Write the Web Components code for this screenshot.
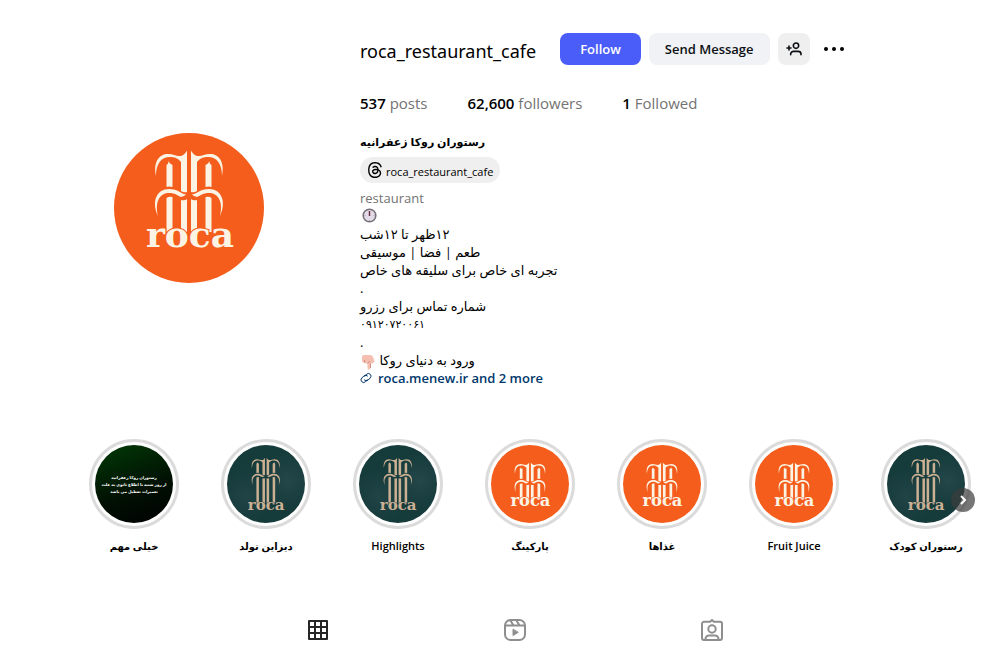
<!DOCTYPE html>
<html lang="en">
<head>
<meta charset="utf-8">
<meta name="viewport" content="width=device-width, initial-scale=1">
<title>roca_restaurant_cafe</title>
<style>
    body {
        margin: 0;
        background: #fff;
        color: #000;
        font-family: "Open Sans", "Noto Sans", "DejaVu Sans", sans-serif;
        font-size: 13px;
        line-height: 18px;
        overflow-x: hidden;
    }
</style>
</head>
<body>
<profile-page></profile-page>

<script>
// Logo: half of the mark is drawn once and mirrored around x = 75.
// "rise" lifts the crown and makes the lower stems longer.
class RocaLogo extends HTMLElement {
    constructor() {
        super();
        this.attachShadow({ mode: 'open' });
    }

    connectedCallback() {
        const variant = this.getAttribute('variant') || 'large';
        const look = {
            large: { box: '0 0 150 150', rise: 0, bg: '#f45d1b', ink: '#fbf3e4' },
            small: { box: '-11 -21 172 172', rise: 0, bg: '#f45d1b', ink: '#fbf3e4' },
            teal: { box: '-18 -41 187 187', rise: 28, bg: '#193d3e', ink: '#cbb094' }
        }[variant];
        const top = 65 - look.rise;
        const half = `
            <g transform="translate(0 ${-look.rise})">
                <path d="M42 43C39 29 45 21 54 21C59 21 62 23 65 23C69 23 71 21 73 17.500V59Q70 60 67 58V29C64 25 60 24 56 24C47 24 42 31 42 43Z"/>
                <path d="M52.500 32C54 31 54.500 30 54.500 28C55 30 57 31 58.500 32V54Q55 53 52.500 54Z"/>
                <path d="M44 83C37 68 43 56 55 56C64 56 67 61 72 61.500L70 63L67 64C64 63 62 61 59 60.500C48 58 40 66 44 83Z"/>
            </g>
            <path d="M52.500 ${top}Q55 ${top - 2} 58.500 ${top - 1}V99H52.500Z"/>
            <path d="M67 ${top + 2}Q71 ${top + 3} 73 ${top + 1}V99H67Z"/>`;
        this.shadowRoot.innerHTML = `
            <style>
                :host { display: block; border-radius: 50%; overflow: hidden; background: ${look.bg}; }
                :host([variant="teal"]) {
                    background: radial-gradient(circle at 78% 45%, #244749, transparent 38%),
                        radial-gradient(circle at 25% 65%, #214446, transparent 35%), #163b3b;
                }
                svg { display: block; width: 100%; height: 100%; fill: ${look.ink}; }
                text { font: bold 36px "DejaVu Serif", serif; stroke: ${look.bg}; stroke-width: 2px; paint-order: stroke; }
            </style>
            <svg viewBox="${look.box}" role="img" aria-label="roca">
                ${half}
                <g transform="matrix(-1 0 0 1 150 0)">${half}</g>
                <text x="76" y="114" text-anchor="middle">roca</text>
            </svg>
        `;
    }
}
customElements.define('roca-logo', RocaLogo);


class ProfileStat extends HTMLElement {
    constructor() {
        super();
        this.attachShadow({ mode: 'open' });
        this.shadowRoot.innerHTML = `
            <style>
                :host { display: block; font-size: 15px; line-height: 20px; color: #737373; }
                ::slotted(b) { font-weight: 600; color: #000; }
            </style>
            <slot></slot>
        `;
    }
}
customElements.define('profile-stat', ProfileStat);


class ProfileActions extends HTMLElement {
    constructor() {
        super();
        this.attachShadow({ mode: 'open' });
        this.shadowRoot.innerHTML = `
            <style>
                :host { display: flex; align-items: center; gap: 8px; }
                button {
                    height: 32px;
                    padding: 0 16px;
                    border: 0;
                    border-radius: 8px;
                    background: #f0f2f5;
                    color: #0c1014;
                    font: 600 13px "Open Sans", sans-serif;
                    white-space: nowrap;
                    cursor: pointer;
                }
                .follow { padding: 0 20px; background: #4a5df9; color: #fff; }
                .icon { display: grid; place-items: center; width: 32px; padding: 0; background: #efefef; }
                .more { background: none; }
            </style>
            <button class="follow">Follow</button>
            <button>Send Message</button>
            <button class="icon" aria-label="Similar accounts">
                <svg width="16" height="16" viewBox="0 0 24 24" fill="none" stroke="#0c1014" stroke-width="2.400" stroke-linecap="round">
                    <circle cx="15" cy="7" r="4"/>
                    <path d="M7 20.500v-1c0-2.500 2-4 4.500-4h6.500c2.500 0 4.500 1.500 4.500 4v1M1.500 10.500h6M4.500 7.500v6"/>
                </svg>
            </button>
            <button class="icon more" aria-label="Options">
                <svg width="32" height="32" viewBox="0 0 32 32">
                    <circle cx="8" cy="16" r="2"/><circle cx="16" cy="16" r="2"/><circle cx="24" cy="16" r="2"/>
                </svg>
            </button>
        `;
    }
}
customElements.define('profile-actions', ProfileActions);


class ThreadsBadge extends HTMLElement {
    constructor() {
        super();
        this.attachShadow({ mode: 'open' });
        this.shadowRoot.innerHTML = `
            <style>
                :host { display: block; }
                a {
                    display: inline-flex;
                    align-items: center;
                    gap: 3px;
                    height: 26px;
                    padding: 0 7px;
                    border-radius: 13px;
                    background: #efefef;
                    color: #000;
                    font-size: 11px;
                    text-decoration: none;
                }
                span { padding-top: 3px; }
            </style>
            <a href="#threads">
                <svg width="16" height="16" viewBox="0 0 192 192"><path d="M141.537 88.9883C140.71 88.5919 139.87 88.2104 139.019 87.8451C137.537 60.5382 122.616 44.905 97.5619 44.745C97.4484 44.7443 97.3355 44.7443 97.222 44.7443C82.2364 44.7443 69.7731 51.1409 62.102 62.7807L75.881 72.2328C81.6116 63.5383 90.6052 61.6848 97.2286 61.6848C97.3051 61.6848 97.3819 61.6848 97.4576 61.6855C105.707 61.7381 111.932 64.1366 115.961 68.814C118.893 72.2193 120.854 76.925 121.825 82.8638C114.511 81.6207 106.601 81.2385 98.145 81.7233C74.3247 83.0954 59.0111 96.9879 60.0396 116.292C60.5615 126.084 65.4397 134.508 73.775 140.011C80.8224 144.663 89.899 146.938 99.3323 146.423C111.79 145.74 121.563 140.987 128.381 132.296C133.559 125.696 136.834 117.143 138.28 106.366C144.217 109.949 148.617 114.664 151.047 120.332C155.179 129.967 155.42 145.8 142.501 158.708C131.182 170.016 117.576 174.908 97.0135 175.059C74.2042 174.89 56.9538 167.575 45.7381 153.317C35.2355 139.966 29.8077 120.682 29.6052 96C29.8077 71.3178 35.2355 52.0336 45.7381 38.6827C56.9538 24.4249 74.2039 17.11 97.0132 16.9405C119.988 17.1113 137.539 24.4614 149.184 38.788C154.894 45.8136 159.199 54.6488 162.037 64.9503L178.184 60.6422C174.744 47.9622 169.331 37.0357 161.965 27.974C147.036 9.60668 125.202 0.195148 97.0695 0H96.9569C68.8816 0.19447 47.2921 9.6418 32.7883 28.0793C19.8819 44.4864 13.2244 67.3157 13.0007 95.9325L13 96L13.0007 96.0675C13.2244 124.684 19.8819 147.514 32.7883 163.921C47.2921 182.358 68.8816 191.806 96.9569 192H97.0695C122.03 191.827 139.624 185.292 154.118 170.811C173.081 151.866 172.51 128.119 166.26 113.541C161.776 103.087 153.227 94.5962 141.537 88.9883ZM98.4405 129.507C88.0005 130.095 77.1544 125.409 76.6196 115.372C76.2232 107.93 81.9158 99.626 99.0812 98.6368C101.047 98.5234 102.976 98.468 104.871 98.468C111.106 98.468 116.939 99.0737 122.242 100.233C120.264 124.935 108.662 128.946 98.4405 129.507Z"/></svg>
                <span><slot></slot></span>
            </a>
        `;
    }
}
customElements.define('threads-badge', ThreadsBadge);


class ProfileBio extends HTMLElement {
    constructor() {
        super();
        this.attachShadow({ mode: 'open' });
        this.shadowRoot.innerHTML = `
            <style>
                :host { display: block; }
                h1 { margin: 0 0 5px; font-size: 11px; line-height: 20px; font-weight: 700; text-align: left; }
                .category { margin-top: 6px; color: #737373; }
                p { margin: 0; height: 18px; text-align: left; }
                p svg { vertical-align: middle; }
                .clock { display: block; padding: 1px 2px; }
                .phone { font-size: 11px; }
                .links { display: flex; align-items: center; gap: 6px; color: #00376b; font-weight: 600; text-decoration: none; }
            </style>
            <h1 dir="rtl" lang="fa">رستوران روکا زعفرانیه</h1>
            <threads-badge>roca_restaurant_cafe</threads-badge>
            <div class="category">restaurant</div>
            <p>
                <svg class="clock" width="15" height="15" viewBox="0 0 15 15" role="img" aria-label="clock">
                    <circle cx="7.500" cy="7.500" r="6.300" fill="#e3dbe8" stroke="#777179" stroke-width="1.600"/>
                    <path d="M7.500 3v5" stroke="#6b3148" stroke-width="1.500"/>
                    <path d="M7.500 12v1M2.500 7.500h1M11.500 7.500h1" stroke="#aaa1af"/>
                </svg>
            </p>
            <p dir="rtl" lang="fa">۱۲ظهر تا ۱۲شب</p>
            <p dir="rtl" lang="fa">طعم | فضا | موسیقی</p>
            <p dir="rtl" lang="fa">تجربه ای خاص برای سلیقه های خاص</p>
            <p>.</p>
            <p dir="rtl" lang="fa">شماره تماس برای رزرو</p>
            <p class="phone" dir="rtl" lang="fa">۰۹۱۲۰۷۲۰۰۶۱</p>
            <p>.</p>
            <p dir="rtl" lang="fa">ورود به دنیای روکا
                <svg width="16" height="16" viewBox="0 0 16 16" role="img" aria-label="pointing down">
                    <path d="M2 3Q2 1 4 1h6q2 0 3 2l1 2.500q1 3-1 3.500l-2.500 1v4q0 1.500-1.500 1.500T7.500 14V9.500L4 9Q1.500 8 2 6Z" fill="#f4bfb0"/>
                    <path d="M7.500 9.500 10 7M4.600 6v2.500M10.500 9.500v4.500" stroke="#d58c80" fill="none"/>
                </svg>
            </p>
            <a class="links" href="#links">
                <svg width="12" height="12" viewBox="0 0 24 24" fill="none" stroke="#00376b" stroke-width="2" stroke-linecap="round">
                    <path d="m9.700 8.600 3.100-3.700a5.300 5.300 0 0 1 7.700-.4 5.300 5.300 0 0 1-.1 7.400l-4 4.100a5.300 5.300 0 0 1-7.500 0"/>
                    <path d="m14.300 15.400-3.100 3.700a5.300 5.300 0 0 1-7.700.4 5.300 5.300 0 0 1 .1-7.400l4-4.100a5.300 5.300 0 0 1 7.500 0"/>
                </svg>
                roca.menew.ir and 2 more
            </a>
        `;
    }
}
customElements.define('profile-bio', ProfileBio);


class HighlightItem extends HTMLElement {
    constructor() {
        super();
        this.attachShadow({ mode: 'open' });
    }

    connectedCallback() {
        const cover = this.getAttribute('cover');
        const picture = cover === 'notice'
            ? `<div class="cover notice" dir="rtl" lang="fa">
                   <span>رستوران روکا زعفرانیه</span>
                   <span>از روز شنبه تا اطلاع ثانوی به علت</span>
                   <span>تعمیرات تعطیل می باشد</span>
               </div>`
            : `<roca-logo class="cover" variant="${cover}"></roca-logo>`;
        this.shadowRoot.innerHTML = `
            <style>
                :host { display: block; flex: 0 0 132px; font-size: 11px; }
                :host([lang="fa"]) { font-size: 10px; }
                a {
                    display: flex;
                    flex-direction: column;
                    align-items: center;
                    gap: 8px;
                    color: #000;
                    font-weight: 600;
                    text-decoration: none;
                }
                .ring { padding: 3px; border: 3px solid #dbdbdb; border-radius: 50%; }
                .cover { width: 78px; height: 78px; border-radius: 50%; }
                .notice {
                    display: flex;
                    flex-direction: column;
                    align-items: center;
                    justify-content: center;
                    background: linear-gradient(160deg, #013a06, #010f03 60%, #000);
                    color: #fff;
                    font-size: 4px;
                    line-height: 7px;
                    white-space: nowrap;
                }
            </style>
            <a href="#highlight">
                <div class="ring">${picture}</div>
                <slot></slot>
            </a>
        `;
    }
}
customElements.define('highlight-item', HighlightItem);


class HighlightTray extends HTMLElement {
    constructor() {
        super();
        this.attachShadow({ mode: 'open' });
        this.shadowRoot.innerHTML = `
            <style>
                :host { display: block; position: relative; }
                .track { display: flex; padding: 0 0 6px 20px; }
                button {
                    position: absolute;
                    top: 50%;
                    right: 7px;
                    width: 24px;
                    height: 24px;
                    margin-top: -12px;
                    padding: 0;
                    border: 0;
                    border-radius: 50%;
                    background: rgba(60, 60, 60, .7);
                    cursor: pointer;
                }
                svg { display: block; margin: auto; }
            </style>
            <div class="track"><slot></slot></div>
            <button aria-label="Next">
                <svg width="12" height="12" viewBox="0 0 12 12" fill="none" stroke="#fff" stroke-width="2"><path d="m4 2 4 4-4 4"/></svg>
            </button>
        `;
    }
}
customElements.define('highlight-tray', HighlightTray);


class ProfileTabs extends HTMLElement {
    constructor() {
        super();
        this.attachShadow({ mode: 'open' });
        this.shadowRoot.innerHTML = `
            <style>
                :host { display: block; }
                nav { display: grid; grid-template-columns: repeat(3, 1fr); max-width: 591px; margin: 0 auto; }
                a { display: grid; place-items: center; height: 24px; color: #8e8e8e; }
                a.active { color: #262626; }
                svg { fill: none; stroke: currentColor; stroke-width: 2; stroke-linejoin: round; stroke-linecap: round; }
            </style>
            <nav>
                <a class="active" href="#posts" aria-label="Posts">
                    <svg width="24" height="24" viewBox="0 0 24 24"><path d="M3 3h18v18H3zM9 3v18M15 3v18M3 9h18M3 15h18"/></svg>
                </a>
                <a href="#reels" aria-label="Reels">
                    <svg width="24" height="24" viewBox="0 0 24 24">
                        <rect x="2" y="2" width="20" height="20" rx="5.500"/>
                        <path d="M2.500 7.500h19M7.500 2.500l3 5M13.500 2.500l3 5"/>
                        <path d="M10 11.500v6l5-3z" fill="currentColor" stroke-width="1"/>
                    </svg>
                </a>
                <a href="#tagged" aria-label="Tagged">
                    <svg width="24" height="24" viewBox="0 0 24 24">
                        <path d="M10.200 3.800 12 2l1.800 1.800H20a2 2 0 0 1 2 2V20a2 2 0 0 1-2 2H4a2 2 0 0 1-2-2V5.800a2 2 0 0 1 2-2z"/>
                        <circle cx="12" cy="11" r="3.700"/>
                        <path d="M5.500 21.500v-.5a3.500 3.500 0 0 1 3.500-3.500h6a3.500 3.500 0 0 1 3.500 3.500v.5"/>
                    </svg>
                </a>
            </nav>
        `;
    }
}
customElements.define('profile-tabs', ProfileTabs);


class ProfilePage extends HTMLElement {
    constructor() {
        super();
        this.attachShadow({ mode: 'open' });
        this.shadowRoot.innerHTML = `
            <style>
                :host { display: block; max-width: 935px; margin: 0 auto; padding: 33px 15px 3px 48px; }
                header { display: grid; grid-template-columns: 282px 1fr; align-items: start; column-gap: 30px; }
                .avatar { width: 150px; height: 150px; margin: 100px auto 0; }
                .top { display: flex; align-items: center; gap: 24px; height: 32px; }
                h2 { margin: 0; padding-top: 4px; font: 400 18px/32px "Noto Sans", sans-serif; }
                .stats { display: flex; gap: 40px; margin: 28px 0 19px; }
                highlight-tray { margin-top: 52px; }
                profile-tabs { margin-top: 57px; }
            </style>
            <header>
                <roca-logo class="avatar" variant="large"></roca-logo>
                <section>
                    <div class="top">
                        <h2>roca_restaurant_cafe</h2>
                        <profile-actions></profile-actions>
                    </div>
                    <div class="stats">
                        <profile-stat><b>537</b> posts</profile-stat>
                        <profile-stat><b>62,600</b> followers</profile-stat>
                        <profile-stat><b>1</b> Followed</profile-stat>
                    </div>
                    <profile-bio></profile-bio>
                </section>
            </header>
            <highlight-tray>
                <highlight-item cover="notice" lang="fa">خیلی مهم</highlight-item>
                <highlight-item cover="teal" lang="fa">دیزاین تولد</highlight-item>
                <highlight-item cover="teal">Highlights</highlight-item>
                <highlight-item cover="small" lang="fa">پارکینگ</highlight-item>
                <highlight-item cover="small" lang="fa">غذاها</highlight-item>
                <highlight-item cover="small">Fruit Juice</highlight-item>
                <highlight-item cover="teal" lang="fa">رستوران کودک</highlight-item>
            </highlight-tray>
            <profile-tabs></profile-tabs>
        `;
    }
}
customElements.define('profile-page', ProfilePage);
</script>
</body>
</html>
